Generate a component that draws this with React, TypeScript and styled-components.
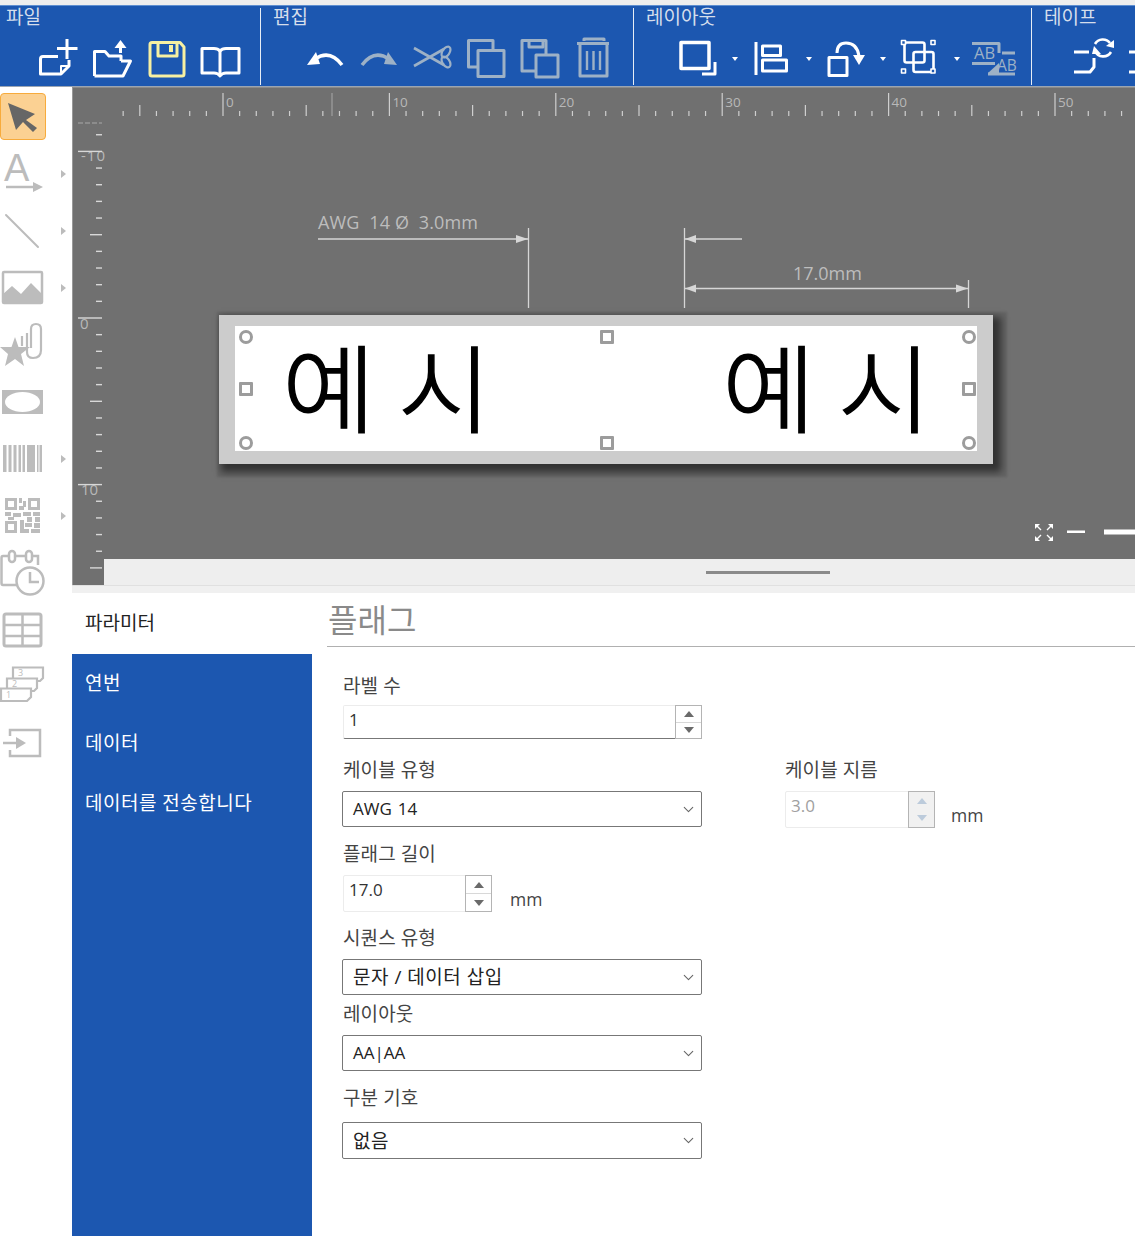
import React from 'react';
import styled, { createGlobalStyle } from 'styled-components';
import { ChevronDown } from 'lucide-react';

const FONT = `"Open Sans", "Noto Sans CJK KR", "Noto Sans", sans-serif`;
const BLUE = '#1c57b0';
const DIS = '#9db1c6';
const GR = '#bcbcbc';

const Global = createGlobalStyle`
  html, body { margin: 0; padding: 0; background: #fff; }
  body { font-family: ${FONT}; }
  * { box-sizing: border-box; }
`;

const Page = styled.div`
  width: 1135px; height: 1236px; overflow: hidden;
  display: flex; flex-direction: column; background: #fff;
`;
const TopStrip = styled.div`height: 5px; background: #eeeeee; flex: none;`;
const Toolbar = styled.div`
  height: 82px; flex: none; background: ${BLUE}; display: flex;
  border-top: 1px solid #5f8fd0; border-bottom: 1px solid #9aa5b3; overflow: hidden;
`;
const Section = styled.section<{ $w: number; $last?: boolean }>`
  width: ${p => p.$w}px; flex: none; position: relative;
  &::after {
    content: ''; display: ${p => (p.$last ? 'none' : 'block')};
    position: absolute; right: 0; top: 2px; bottom: 1px; width: 1.5px; background: #e6edf6;
  }
`;
const SectionTitle = styled.div<{ $left: number }>`
  height: 32px; line-height: 23px; font-size: 19px; color: #d5deec; white-space: nowrap;
  margin-left: ${p => p.$left}px;
`;
const IconRow = styled.div<{ $gap: number; $pad: number }>`
  display: flex; align-items: flex-start; gap: ${p => p.$gap}px; padding-left: ${p => p.$pad}px;
`;
const BarIcon = styled.svg<{ $c?: string }>`
  width: 40px; height: 40px; flex: none; fill: none; overflow: visible;
  stroke: ${p => p.$c || '#fff'}; stroke-width: 3; stroke-linejoin: round; stroke-linecap: butt;
`;
const Caret = styled.div`
  width: 34px; height: 40px; flex: none; display: flex; align-items: center; justify-content: center;
  &::before {
    content: ''; border-left: 3.5px solid transparent; border-right: 3.5px solid transparent;
    border-top: 4px solid #fff; margin-top: 1px;
  }
`;

const Workspace = styled.div`flex: 1; display: flex; min-height: 0;`;
const ToolColumn = styled.aside`
  width: 72px; flex: none; background: #fff; display: flex; flex-direction: column; padding-top: 1px;
`;
const ToolRow = styled.div`height: 57px; flex: none; display: flex; align-items: center;`;
const ToolButton = styled.div<{ $active?: boolean }>`
  width: 46px; height: 47px; flex: none; border-radius: 4px; display: flex; align-items: center;
  background: ${p => (p.$active ? '#fbd193' : 'transparent')};
  border: ${p => (p.$active ? '1.5px solid #f7ab3c' : 'none')};
`;
const ToolCaret = styled.div<{ $show?: boolean }>`
  margin-left: 15px; visibility: ${p => (p.$show ? 'visible' : 'hidden')};
  border-top: 4px solid transparent; border-bottom: 4px solid transparent; border-left: 5px solid ${GR};
`;
const ToolIcon = styled.svg`
  width: 46px; height: 46px; flex: none; overflow: visible; fill: none; stroke: ${GR}; stroke-width: 2.5;
`;

const Main = styled.main`flex: 1; min-width: 0; display: flex; flex-direction: column;`;
const Canvas = styled.div`
  height: 498px; flex: none; background: #707070; position: relative; overflow: hidden;
  border-left: 1px solid #999; border-top: 1px solid #8a8a8a;
`;
const Art = styled.svg`position: absolute; left: -1px; top: -1px; width: 1063px; height: 498px; font-family: ${FONT};`;
const LabelPlate = styled.div`
  position: absolute; left: 146px; top: 227px; width: 774px; height: 149px;
  background: #cccccc; padding: 11px 16px 13px;
  box-shadow: 5px 5px 7px 3px rgba(0,0,0,.5), 5.5px 4.5px 2px 8px rgba(0,0,0,.1);
`;
const PrintArea = styled.div`
  width: 100%; height: 100%; background: #fff; position: relative; display: flex; padding-left: 47px;
`;
const LabelText = styled.div`
  width: 440px; flex: none; font-size: 96px; line-height: 115px; color: #000; white-space: nowrap;
  font-family: "Noto Sans CJK KR", sans-serif; font-weight: 300;
  -webkit-text-stroke: 1.4px #000;
  transform: scaleX(1.06); transform-origin: left center;
`;
const Handle = styled.span<{ $x: number; $y: number; $round?: boolean }>`
  position: absolute; left: ${p => p.$x - 7}px; top: ${p => p.$y - 7}px; width: 14px; height: 14px;
  background: #fff; border: 3.5px solid #9c9c9c; border-radius: ${p => (p.$round ? '50%' : '1px')};
`;
const ScrollStrip = styled.div`
  position: absolute; left: 31px; right: 0; bottom: 0; height: 26px; background: #eeeeee;
  display: flex; align-items: center; padding-left: 602px;
`;
const ScrollThumb = styled.div`width: 124px; height: 2.5px; background: #8a8a8a; margin-top: 1px;`;
const Grip = styled.div`height: 8px; flex: none; background: #f0f0f0; border-top: 1px solid #e0e0e0;`;

const Panel = styled.div`flex: 1; display: flex; min-height: 0;`;
const Nav = styled.nav`width: 240px; flex: none; display: flex; flex-direction: column;`;
const NavHeader = styled.div`
  height: 61px; flex: none; display: flex; align-items: center; padding: 0 0 3px 13px;
  font-size: 19px; color: #222;
`;
const NavList = styled.div`flex: 1; background: ${BLUE};`;
const NavItem = styled.div`
  height: 60px; display: flex; align-items: center; padding: 0 0 4px 13px;
  font-size: 19px; letter-spacing: 0.5px; color: #fff; white-space: nowrap;
`;
const Content = styled.div`flex: 1; padding-left: 15px; min-width: 0;`;
const Title = styled.h2`
  margin: 0; height: 54px; border-bottom: 1.5px solid #b0b0b0; font-weight: 400; font-size: 32px;
  line-height: 54px; color: #8a8a8a; padding-left: 1px;
`;
const Form = styled.div`display: flex; padding: 27px 0 0 15px; align-items: flex-start;`;
const Col = styled.div<{ $w: number; $top?: number; $ml?: number }>`
  width: ${p => p.$w}px; flex: none; padding-top: ${p => p.$top || 0}px; margin-left: ${p => p.$ml || 0}px;
`;
const FieldLabel = styled.label<{ $mt?: number; $mb?: number }>`
  display: block; height: 22px; line-height: 24px; font-size: 19px; letter-spacing: 0.1px; color: #444; white-space: nowrap;
  padding-left: 1px;
  margin-top: ${p => p.$mt || 0}px; margin-bottom: ${p => p.$mb ?? 11}px;
`;
const InputRow = styled.div`display: flex; align-items: flex-start; padding-left: 1px;`;
const Spin = styled.div<{ $w: number; $h: number; $focus?: boolean }>`
  width: ${p => p.$w}px; height: ${p => p.$h}px; display: flex; flex: none;
  border: 1px solid #ececec;
  border-bottom: ${p => (p.$focus ? '1.5px solid #777' : '1px solid #ececec')};
  border-radius: 2px; background: #fff;
`;
const SpinValue = styled.div<{ $disabled?: boolean }>`
  flex: 1; padding: 2px 0 0 5px; font-size: 17px; line-height: 24px;
  color: ${p => (p.$disabled ? '#a0a0a0' : '#333')};
`;
const SpinButtons = styled.div<{ $disabled?: boolean }>`
  width: 27px; flex: none; margin: -1px -1px -1px 0;
  border: 1.5px solid #b4b4b4; display: flex; flex-direction: column;
  background: ${p => (p.$disabled ? '#f1f1f1' : '#fff')};
`;
const SpinBtn = styled.div<{ $down?: boolean; $disabled?: boolean }>`
  flex: 1; display: flex; align-items: center; justify-content: center;
  border-top: ${p => (p.$down && !p.$disabled ? '1px solid #d8d8d8' : 'none')};
  &::before {
    content: ''; border-left: 5px solid transparent; border-right: 5px solid transparent;
    ${p => (p.$down ? 'border-top' : 'border-bottom')}: 6px solid ${p => (p.$disabled ? '#bccbdb' : '#6a6a6a')};
  }
`;
const Unit = styled.span<{ $ml: number }>`
  font-size: 17.5px; color: #444; margin-left: ${p => p.$ml}px; padding-top: 12px;
`;
const Select = styled.div<{ $h?: number }>`
  width: 360px; height: ${p => p.$h || 36}px; border: 1px solid #777; border-radius: 2px; background: #fff;
  display: flex; align-items: center; justify-content: space-between;
  padding: 0 4px 2px 10px; font-size: 17px; color: #222; white-space: nowrap;
  svg { color: #666; margin-top: 2px; }
`;
const SelectValue = styled.span<{ $ko?: boolean }>`
  font-size: ${p => (p.$ko ? 19 : 17)}px;
  letter-spacing: ${p => (p.$ko ? 0.5 : 0)}px;
  word-spacing: ${p => (p.$ko ? 0 : 1.5)}px;
`;

const Up = ({ w, h, v, focus, disabled }: { w: number; h: number; v: string; focus?: boolean; disabled?: boolean }) => (
  <Spin $w={w} $h={h} $focus={focus}>
    <SpinValue $disabled={disabled}>{v}</SpinValue>
    <SpinButtons $disabled={disabled}>
      <SpinBtn $disabled={disabled} />
      <SpinBtn $down $disabled={disabled} />
    </SpinButtons>
  </Spin>
);

const SelectBox = ({ v, h, ko }: { v: string; h?: number; ko?: boolean }) => (
  <Select $h={h}>
    <SelectValue $ko={ko}>{v}</SelectValue>
    <ChevronDown size={17} strokeWidth={1.5} />
  </Select>
);

const Rulers = () => {
  const step = 16.64;
  const h: React.ReactNode[] = [];
  for (let i = -6; i <= 54; i++) {
    const x = 223 + i * step;
    const major = i % 10 === 0;
    const mid = !major && ((i % 5) + 5) % 5 === 0;
    h.push(<line key={i} x1={x} x2={x} y1={major ? 93 : mid ? 105 : 111} y2={116} stroke="#cfcfcf" strokeWidth={1.2} />);
    if (major && i >= 0) {
      h.push(<text key={`t${i}`} x={x + 3} y={107} fontSize={13.5} fill="#b8b8b8">{i}</text>);
    }
  }
  const v: React.ReactNode[] = [];
  for (let i = -11; i <= 15; i++) {
    const y = 318 + i * 16.66;
    const major = i % 10 === 0;
    const mid = !major && ((i % 5) + 5) % 5 === 0;
    v.push(<line key={i} x1={major ? 78 : mid ? 90 : 96} x2={102} y1={y} y2={y} stroke="#d8d8d8" strokeWidth={1.4} />);
  }
  return (
    <>
      {h}
      <line x1={332} x2={332} y1={93} y2={116} stroke="#a8a8a8" />
      <line x1={78} x2={102} y1={123} y2={123} stroke="#a8a8a8" strokeDasharray="5 2" />
      <text x={81} y={161} fontSize={15} fill="#b8b8b8" letterSpacing={1}>-10</text>
      <text x={80} y={329} fontSize={15} fill="#b8b8b8">0</text>
      <text x={81} y={495} fontSize={15} fill="#b8b8b8">10</text>
      {v}
    </>
  );
};

const Dims = () => (
  <g stroke="#d6d6d6" strokeWidth={1.3} fill="#d6d6d6">
    <line x1={318} x2={528} y1={239} y2={239} />
    <line x1={528.5} x2={528.5} y1={228} y2={308} />
    <polygon points="528,239 516,235 516,243" stroke="none" />
    <line x1={684.5} x2={684.5} y1={228} y2={308} />
    <line x1={685} x2={742} y1={239} y2={239} />
    <polygon points="685,239 696,235 696,243" stroke="none" />
    <line x1={685} x2={968} y1={288.5} y2={288.5} />
    <polygon points="685,288.5 696,284.5 696,292.5" stroke="none" />
    <polygon points="968,288.5 956,284.5 956,292.5" stroke="none" />
    <line x1={968.5} x2={968.5} y1={280} y2={308} />
    <text x={318} y={229} fontSize={18} fill="#bdbdbd" stroke="none" letterSpacing={0.15} xmlSpace="preserve">AWG  14 Ø  3.0mm</text>
    <text x={793} y={280} fontSize={18} fill="#bdbdbd" stroke="none">17.0mm</text>
  </g>
);

const ZoomControls = () => (
  <g stroke="#fff" fill="none">
    <g strokeWidth={1.4}>
      <path d="M1036 525 l5 5 M1052 525 l-5 5 M1036 540 l5 -5 M1052 540 l-5 -5" />
    </g>
    <g fill="#fff" stroke="none">
      <polygon points="1035,524 1040,524 1035,529" />
      <polygon points="1053,524 1048,524 1053,529" />
      <polygon points="1035,541 1040,541 1035,536" />
      <polygon points="1053,541 1048,541 1053,536" />
      <rect x={1067} y={530.5} width={18} height={2.5} />
      <rect x={1104} y={529.5} width={31} height={5} />
    </g>
  </g>
);

const tools: { icon: React.ReactNode; caret?: boolean; active?: boolean }[] = [
  { active: true, icon: <polygon points="7,9 34,20 25,26 36,34 32,38 22,28 15,36" fill="#666" stroke="none" /> },
  {
    caret: true,
    icon: (
      <>
        <text x={4} y={30} fontFamily='"Liberation Sans", sans-serif' fontSize={38} fill={GR} stroke="none">A</text>
        <line x1={6} x2={36} y1={36} y2={36} strokeWidth={2.5} />
        <polygon points="33,31 43,36 33,41" fill={GR} stroke="none" />
      </>
    ),
  },
  { caret: true, icon: <line x1={6} y1={7} x2={38} y2={39} strokeWidth={2} strokeLinecap="round" /> },
  {
    caret: true,
    icon: (
      <>
        <rect x={3} y={7} width={39} height={31} strokeWidth={2.5} rx={1} />
        <path d="M2 38 V30 L12 21 L21 29 L31 18 L43 30 V38 Z" fill={GR} stroke="none" />
      </>
    ),
  },
  {
    icon: (
      <>
        <polygon points="15,15 18.5,25 30,25 21,32 24,44 15,37 5,44 8,32 0,25 11.5,25" fill={GR} stroke="none" />
        <path d="M22 14 V24 M27 11 V30 Q27 36 33 36 Q41 36 41 28 V7 Q41 2 36 2 Q31 2 31 7 V26" strokeWidth={2.2} />
      </>
    ),
  },
  {
    icon: (
      <>
        <rect x={2} y={11} width={41} height={24} fill={GR} stroke="none" />
        <ellipse cx={22.5} cy={23} rx={17.5} ry={10} fill="#fff" stroke="none" />
      </>
    ),
  },
  {
    caret: true,
    icon: (
      <g fill={GR} stroke="none">
        {[[3, 3.5], [8.5, 3], [13.5, 3], [18.5, 2.5], [22.5, 2.5], [27, 8], [37, 1.5], [39.5, 2.5]].map(([x, w]) => (
          <rect key={x} x={x} y={9} width={w} height={27} />
        ))}
      </g>
    ),
  },
  {
    caret: true,
    icon: (
      <g fill={GR} stroke="none">
        <path fillRule="evenodd" d="M5 5 H17 V17 H5 Z M8 8 V14 H14 V8 Z" />
        <path fillRule="evenodd" d="M28 5 H40 V17 H28 Z M31 8 V14 H37 V8 Z" />
        <path fillRule="evenodd" d="M5 28 H17 V40 H5 Z M8 31 V37 H14 V31 Z" />
        <rect x={19} y={5} width={3} height={5} /><rect x={23} y={8} width={3} height={6} /><rect x={19} y={13} width={5} height={4} />
        <rect x={5} y={19} width={6} height={4} /><rect x={13} y={20} width={8} height={4} /><rect x={8} y={24} width={6} height={3} />
        <rect x={23} y={19} width={8} height={4} /><rect x={33} y={19} width={7} height={4} /><rect x={27} y={24} width={5} height={5} />
        <rect x={35} y={24} width={5} height={5} /><rect x={20} y={27} width={4} height={9} /><rect x={25} y={30} width={7} height={4} />
        <rect x={34} y={30} width={6} height={5} /><rect x={20} y={36} width={9} height={4} /><rect x={31} y={36} width={9} height={4} />
      </g>
    ),
  },
  {
    icon: (
      <>
        <path d="M9 6 H3 Q1.5 6 1.5 8 V33 Q1.5 35 3 35 H17 M15 6 H26 M32 6 H38 V15" strokeWidth={2.5} />
        <rect x={9} y={1} width={6} height={11} rx={3} strokeWidth={2.5} />
        <rect x={26} y={1} width={6} height={11} rx={3} strokeWidth={2.5} />
        <circle cx={30} cy={31} r={13.5} fill="#fff" strokeWidth={2.5} />
        <path d="M30 22 V32 H39" strokeWidth={2.5} />
      </>
    ),
  },
  {
    icon: (
      <>
        <rect x={4} y={7} width={37} height={32} rx={2} strokeWidth={3} />
        <path d="M4 18 H41 M4 29 H41 M22.5 7 V39" strokeWidth={2.5} />
      </>
    ),
  },
  {
    icon: (
      <>
        <path d="M13 14 V3.5 H43 V14 L40 17 H36" strokeWidth={2.2} />
        <path d="M7 24 V14.5 H37 V24 L34 27 H30" strokeWidth={2.2} fill="#fff" />
        <path d="M1 24.5 H31 V33 L27 37 H1 Z" strokeWidth={2.2} fill="#fff" />
        <g fontSize={9} fill={GR} stroke="none" fontFamily={FONT}>
          <text x={18} y={12}>3</text>
          <text x={12} y={23}>2</text>
          <text x={6} y={34}>1</text>
        </g>
      </>
    ),
  },
  {
    icon: (
      <>
        <path d="M10 15 V9 H40 V35 H10 V29" strokeWidth={2.5} />
        <path d="M3 22 H18" strokeWidth={2.5} />
        <polygon points="16,16 26,22 16,28" fill={GR} stroke="none" />
      </>
    ),
  },
];

export default function App() {
  return (
    <Page>
      <Global />
      <TopStrip />
      <Toolbar>
        <Section $w={261}>
          <SectionTitle $left={6}>파일</SectionTitle>
          <IconRow $gap={14} $pad={38}>
            <BarIcon viewBox="0 0 40 40">
              <path d="M20 18.5 H5 Q2.5 18.5 2.5 21 V36 H23 L31 28 V22" />
              <path d="M23 36 V28 H31" strokeWidth={2} />
              <path d="M29 1 V21 M19 10.5 H39.5" />
            </BarIcon>
            <BarIcon viewBox="0 0 40 40">
              <path d="M2.5 38 V13.5 H13 L17 18 H29 V23 M2.5 38 H31 L38.5 23 H29" />
              <polygon points="28.5,2 34.5,10 22.5,10" fill="#fff" stroke="none" />
              <path d="M28.5 9 V15" />
            </BarIcon>
            <BarIcon viewBox="0 0 40 40" $c="#f6f0a2">
              <path d="M6 4.5 H34 L38 9 V36 Q38 38 36 38 H6 Q4 38 4 36 V6.5 Q4 4.5 6 4.5 Z" />
              <path d="M12 5 V18 H31 V5" />
              <rect x={23} y={7} width={4} height={7} fill="#f6f0a2" stroke="none" />
            </BarIcon>
            <BarIcon viewBox="0 0 40 40">
              <path d="M2 10.5 H14 Q18 10.5 20 13 Q22 10.5 26 10.5 H39 V35 H26 Q22 35 20 38 Q18 35 14 35 H2 Z" />
              <path d="M20 13 V37" />
            </BarIcon>
          </IconRow>
        </Section>
        <Section $w={373}>
          <SectionTitle $left={12}>편집</SectionTitle>
          <IconRow $gap={13.5} $pad={44}>
            <BarIcon viewBox="0 0 40 40">
              <path d="M10 21 Q25 11 37 27" strokeWidth={3.5} />
              <polygon points="2,27 11,14 15,26" fill="#fff" stroke="none" />
            </BarIcon>
            <BarIcon viewBox="0 0 40 40" $c={DIS}>
              <path d="M30 21 Q15 11 3 27" strokeWidth={3.5} />
              <polygon points="38,27 29,14 25,26" fill={DIS} stroke="none" />
            </BarIcon>
            <BarIcon viewBox="0 0 40 40" $c={DIS}>
              <path d="M2 10 L32 27 M2 28 L32 11" strokeWidth={2.6} />
              <ellipse cx={34} cy={14} rx={3.5} ry={6} transform="rotate(35 34 14)" strokeWidth={2.2} />
              <ellipse cx={34} cy={24} rx={3.5} ry={6} transform="rotate(-35 34 24)" strokeWidth={2.2} />
            </BarIcon>
            <BarIcon viewBox="0 0 40 40" $c={DIS}>
              <path d="M12 29 H2.5 V2.5 H27 V12" />
              <rect x={12} y={12.5} width={26} height={26} />
            </BarIcon>
            <BarIcon viewBox="0 0 40 40" $c={DIS}>
              <path d="M16 33 H3 V2.5 H27 V17" />
              <path d="M10 2.5 V9 H24 V2.5" />
              <rect x={17} y={17} width={22} height={22} />
            </BarIcon>
            <BarIcon viewBox="0 0 40 40" $c={DIS}>
              <path d="M11 3 V1 H31 V3 M4 5.5 H36" />
              <path d="M7 7 V38 H34 V7" />
              <path d="M14 13 V32 M20.5 13 V32 M27 13 V32" strokeWidth={2.4} />
            </BarIcon>
          </IconRow>
        </Section>
        <Section $w={398}>
          <SectionTitle $left={12}>레이아웃</SectionTitle>
          <IconRow $gap={0} $pad={44}>
            <BarIcon viewBox="0 0 40 40">
              <rect x={3} y={4.5} width={28} height={26} strokeWidth={3.5} />
              <path d="M24 36 H37 V24" />
            </BarIcon>
            <Caret />
            <BarIcon viewBox="0 0 40 40">
              <path d="M4 4 V37" />
              <rect x={10.5} y={8} width={18} height={9.5} />
              <rect x={10.5} y={22} width={24} height={11} />
            </BarIcon>
            <Caret />
            <BarIcon viewBox="0 0 40 40">
              <rect x={3} y={19.5} width={18} height={18} />
              <path d="M11 15 Q11 5 20 5 Q31 5 33 18" />
              <polygon points="27,17 39,17 33,27" fill="#fff" stroke="none" />
            </BarIcon>
            <Caret />
            <BarIcon viewBox="0 0 40 40">
              <rect x={4.5} y={4.5} width={20} height={20} rx={2} strokeWidth={2.6} />
              <rect x={13.5} y={14} width={20} height={20} rx={2} strokeWidth={2.6} />
              <g strokeWidth={1.6} fill={BLUE}>
                <rect x={1.5} y={2.5} width={4} height={4} />
                <rect x={31} y={2.5} width={4} height={4} />
                <rect x={1.5} y={31} width={4} height={4} />
                <rect x={31} y={31} width={4} height={4} />
              </g>
            </BarIcon>
            <Caret />
            <BarIcon viewBox="0 0 40 40" $c={DIS}>
              <path d="M-2 5.5 H25 V15 M28 15 H41 M-2 25.5 H21" strokeWidth={3} />
              <path d="M14 36 H41" strokeWidth={3} />
              <polygon points="25,25 14,35 25,35" fill={DIS} stroke="none" />
              <text x={0} y={21} fontSize={16.5} fill={DIS} stroke="none" fontFamily='"Open Sans", sans-serif'>AB</text>
              <text x={23} y={33} fontSize={15.5} fill={DIS} stroke="none" fontFamily='"Open Sans", sans-serif'>AB</text>
            </BarIcon>
          </IconRow>
        </Section>
        <Section $w={103} $last>
          <SectionTitle $left={12}>테이프</SectionTitle>
          <IconRow $gap={14} $pad={42}>
            <BarIcon viewBox="0 0 40 40">
              <path d="M0 14 H15 M0 34 H16 L20 29 V20" />
              <path d="M21 6 A9 9 0 0 1 36 5 M37 14 A9 9 0 0 1 21 13" strokeWidth={2.6} />
              <polygon points="40,2 40,10 32,8" fill="#fff" stroke="none" />
              <polygon points="18,16 27,16 20,8" fill="#fff" stroke="none" />
            </BarIcon>
            <BarIcon viewBox="0 0 40 40">
              <path d="M1 14 H18 M1 34 H18" />
            </BarIcon>
          </IconRow>
        </Section>
      </Toolbar>
      <Workspace>
        <ToolColumn>
          {tools.map((t, i) => (
            <ToolRow key={i}>
              <ToolButton $active={t.active}>
                <ToolIcon viewBox="0 0 46 46">{t.icon}</ToolIcon>
              </ToolButton>
              <ToolCaret $show={t.caret} />
            </ToolRow>
          ))}
        </ToolColumn>
        <Main>
          <Canvas>
            <Art viewBox="72 87 1063 498">
              <Rulers />
              <Dims />
              <ZoomControls />
            </Art>
            <LabelPlate>
              <PrintArea>
                <LabelText>예 시</LabelText>
                <LabelText>예 시</LabelText>
                <Handle $x={11} $y={11} $round />
                <Handle $x={372} $y={11} />
                <Handle $x={734} $y={11} $round />
                <Handle $x={11} $y={63} />
                <Handle $x={734} $y={63} />
                <Handle $x={11} $y={117} $round />
                <Handle $x={372} $y={117} />
                <Handle $x={734} $y={117} $round />
              </PrintArea>
            </LabelPlate>
            <ScrollStrip>
              <ScrollThumb />
            </ScrollStrip>
          </Canvas>
          <Grip />
          <Panel>
            <Nav>
              <NavHeader>파라미터</NavHeader>
              <NavList>
                <NavItem>연번</NavItem>
                <NavItem>데이터</NavItem>
                <NavItem>데이터를 전송합니다</NavItem>
              </NavList>
            </Nav>
            <Content>
              <Title>플래그</Title>
              <Form>
                <Col $w={443}>
                  <FieldLabel $mb={9}>라벨 수</FieldLabel>
                  <InputRow>
                    <Up w={359} h={34} v="1" focus />
                  </InputRow>
                  <FieldLabel $mt={19}>케이블 유형</FieldLabel>
                  <SelectBox v="AWG 14" />
                  <FieldLabel $mt={15}>플래그 길이</FieldLabel>
                  <InputRow>
                    <Up w={149} h={37} v="17.0" />
                    <Unit $ml={18}>mm</Unit>
                  </InputRow>
                  <FieldLabel $mt={14}>시퀀스 유형</FieldLabel>
                  <SelectBox v="문자 / 데이터 삽입" ko />
                  <FieldLabel $mt={7}>레이아웃</FieldLabel>
                  <SelectBox v="AA|AA" />
                  <FieldLabel $mt={15} $mb={14}>구분 기호</FieldLabel>
                  <SelectBox v="없음" h={37} ko />
                </Col>
                <Col $w={250} $top={84} $ml={-1}>
                  <FieldLabel>케이블 지름</FieldLabel>
                  <InputRow>
                    <Up w={150} h={37} v="3.0" disabled />
                    <Unit $ml={16}>mm</Unit>
                  </InputRow>
                </Col>
              </Form>
            </Content>
          </Panel>
        </Main>
      </Workspace>
    </Page>
  );
}
